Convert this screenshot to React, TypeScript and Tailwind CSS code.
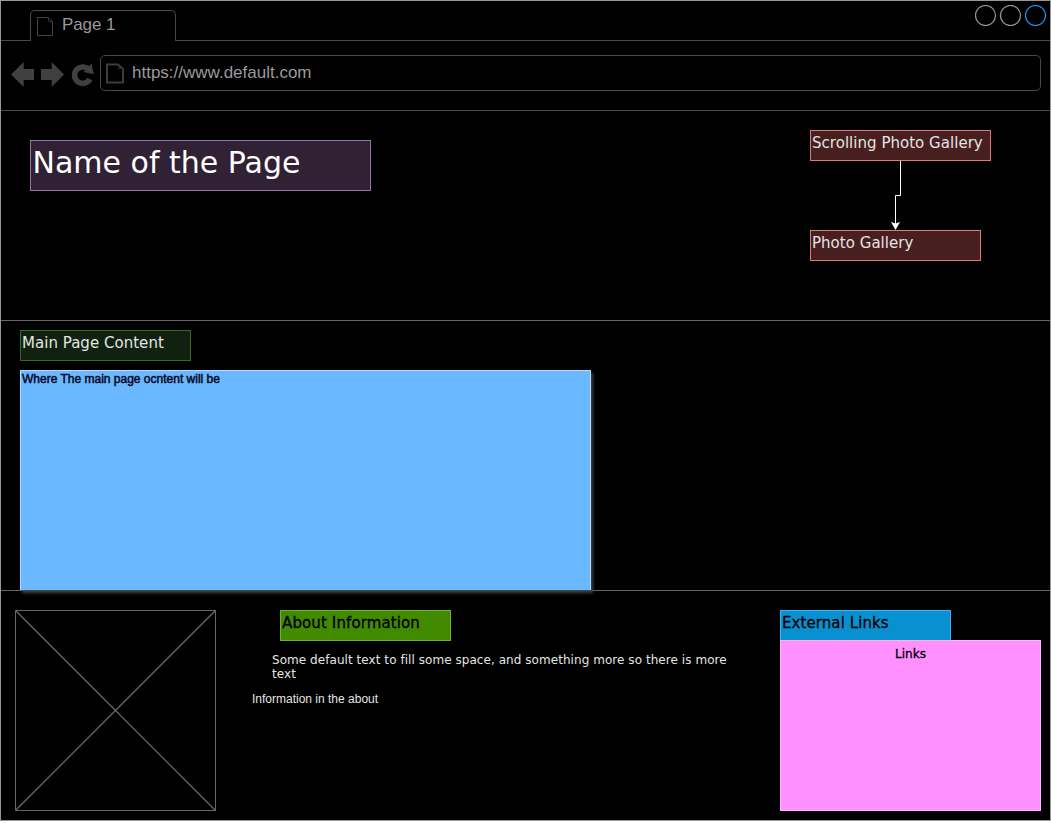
import type { ReactNode } from "react";

const sans = "font-['Liberation_Sans',Arial,sans-serif]";
const verdana = "font-['DejaVu_Sans',Verdana,sans-serif]";

function Label({ className, children }: { className: string; children: ReactNode }) {
  return (
    <div className={`h-[31px] border pl-px pt-[3px] text-[15px] leading-[18px] tracking-[0.03px] whitespace-nowrap ${verdana} ${className}`}>
      {children}
    </div>
  );
}

function TabStrip() {
  return (
    <div className="flex h-10">
      <div className="w-[29px] border-b border-[#484848]" />
      <div className="mt-[9px] flex w-[146px] rounded-t-[5px] border border-b-0 border-[#484848]">
        <svg className="ml-[6px] mt-[6px] h-[19px] w-[17px]" viewBox="0 0 17 19" fill="none" stroke="#444444">
          <path d="M.5 .5H11.5L15.5 4.5V18.5H.5Z" />
          <path d="M11.5 .5V4.5H15.5" stroke="#2c2c2c" />
        </svg>
        <span className={`ml-[8px] mt-[4px] text-[17px] leading-[19px] tracking-[-0.1px] text-[#9a9a9a] ${sans}`}>Page 1</span>
      </div>
      <div className="flex flex-1 justify-end gap-1 border-b border-[#484848] pr-1 pt-1">
        <svg className="h-[21px] w-[71px]" viewBox="0 0 71 21" fill="none" strokeWidth="1.2">
          <circle cx="10.5" cy="10.5" r="10" stroke="#999999" />
          <circle cx="35.5" cy="10.5" r="10" stroke="#999999" />
          <circle cx="60.5" cy="10.5" r="10" stroke="#1a94ff" />
        </svg>
      </div>
    </div>
  );
}

function Toolbar() {
  return (
    <div className="flex h-[70px] border-b border-[#484848]">
      <svg className="h-[50px] w-[99px]" viewBox="1 41 99 50" fill="#404040">
        <path d="M11 74.5L23.7 62V69H34V80H23.7V87Z" />
        <path d="M64 74.5L51.7 62V69H41V80H51.7V87Z" />
        <path d="M88.4 69.2A8.2 8.2 0 1 0 89.9 79.2" fill="none" stroke="#404040" strokeWidth="5.6" />
        <path d="M91.5 63.8L93.8 74.2L83.3 72L87 69L88 66.5Z" />
      </svg>
      <div className="mt-[14px] flex h-9 w-[941px] rounded-[5px] border border-[#484848]">
        <svg className="ml-[5px] mt-[7px] h-[21px] w-[19px]" viewBox="0 0 19 21" fill="none" stroke="#3c3c3c" strokeWidth="2">
          <path d="M1 1.5H12L17 6V19.5H1Z" />
          <path d="M12.5 1.5V5.5H17" stroke="#2c2c2c" strokeWidth="1" />
        </svg>
        <span className={`ml-[7px] mt-[7px] text-[17px] leading-[19px] text-[#9a9a9a] ${sans}`}>https://www.default.com</span>
      </div>
    </div>
  );
}

function Hero() {
  return (
    <section className="flex h-[210px] justify-between border-b border-[#666666] pl-[29px] pr-[59px]">
      <h1 className={`mt-[29px] h-[51px] w-[341px] border border-[#9673a6] bg-[#302134] pl-[1.5px] pt-[4px] text-[30px] leading-[35px] whitespace-nowrap text-white ${verdana}`}>
        Name of the Page
      </h1>
      <div className="mt-[19px] w-[181px]">
        <Label className="w-[181px] border-[#dc7a76] bg-[#481f1f] text-[#e4e4e4]">Scrolling Photo Gallery</Label>
        <svg className="block h-[69px] w-[181px]" viewBox="0 0 181 69">
          <path d="M90.5 0V34.5H85.5V64" fill="none" stroke="#ffffff" />
          <path d="M85.5 69L81 61L85.5 62.5L90 61Z" fill="#ffffff" />
        </svg>
        <Label className="w-[171px] border-[#dc7a76] bg-[#481f1f] text-[#e4e4e4]">Photo Gallery</Label>
      </div>
    </section>
  );
}

function MainContent() {
  return (
    <section className="h-[270px] border-b border-[#666666] pl-[19px] pt-[9px]">
      <Label className="w-[171px] border-[#3a6a20] bg-[#10220f] text-[#e4e4e4]">Main Page Content</Label>
      <div className={`mt-[9px] h-[220px] w-[571px] border border-b-0 border-[#b8d8ff] bg-[#6ab8ff] pl-px pt-px text-[12px] leading-[14px] text-[#050a28] [-webkit-text-stroke:0.5px_#050a28] shadow-[2px_3px_3px_#444444] ${sans}`}>
        Where The main page ocntent will be
      </div>
    </section>
  );
}

function Footer() {
  return (
    <section className="flex h-[229px] pl-[14px] pt-[19px]">
      <svg className="h-[201px] w-[201px]" viewBox="0 0 201 201" fill="none" stroke="#666666">
        <path d="M.5 .5H200.5V200.5H.5Z" />
        <path d="M.5 .5L200.5 200.5M200.5 .5L.5 200.5" stroke="#6e6e6e" strokeWidth="1.2" />
      </svg>
      <div className="ml-[36px] w-[528px]">
        <Label className="ml-[28px] w-[171px] border-[#6cb238] bg-[#428a00] text-black [-webkit-text-stroke:0.3px_#000000]">
          <span className="tracking-[0.12px]">About Information</span>
        </Label>
        <p className={`ml-[20px] mt-[12px] w-[470px] text-[12px] leading-[14px] tracking-[0.055px] text-[#e4e4e4] ${verdana}`}>
          Some default text to fill some space, and something more so there is more text
        </p>
        <p className={`mt-[11px] text-[12px] leading-[14px] text-[#e4e4e4] ${sans}`}>Information in the about</p>
      </div>
      <div className="w-[261px]">
        <Label className="w-[171px] border-[#46b0f4] bg-[#0890d0] text-black [-webkit-text-stroke:0.3px_#000000]">
          <span className="tracking-[0.08px]">External Links</span>
        </Label>
        <div className={`relative -mt-px h-[171px] border border-[#ffb4ff] bg-[#ff90ff] pt-[6px] text-center text-[12px] leading-[14px] text-black [-webkit-text-stroke:0.3px_#000000] ${verdana}`}>
          Links
        </div>
      </div>
    </section>
  );
}

export default function App() {
  return (
    <div className="h-[823px] w-[1051px] bg-white">
      <div className="h-[821px] w-[1051px] overflow-hidden border border-[#989898] bg-black">
        <TabStrip />
        <Toolbar />
        <Hero />
        <MainContent />
        <Footer />
      </div>
    </div>
  );
}
